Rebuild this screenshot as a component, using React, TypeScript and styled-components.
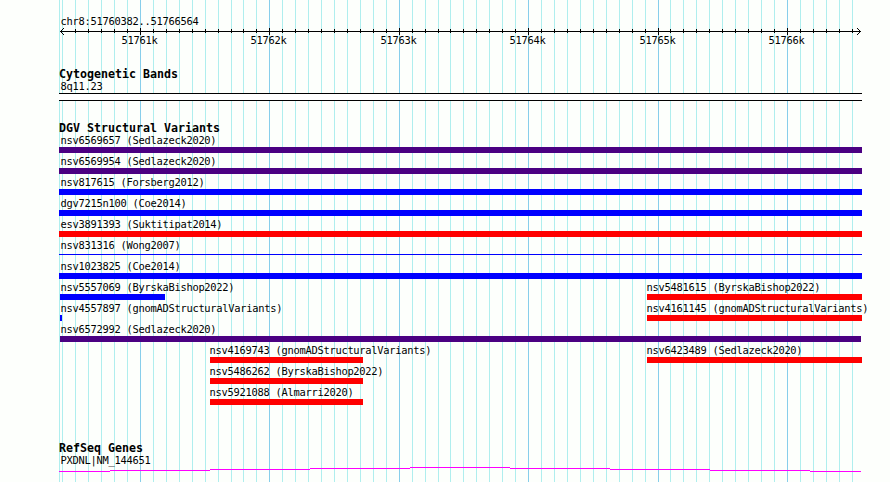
import React from 'react';
import styled, { createGlobalStyle } from "styled-components";

const GlobalStyle = createGlobalStyle`
  body{
    margin: 0;
    background: #fdfffc;
  }
`

const StyledBrowser = styled.div`
  position: relative;
  width: 890px;
  height: 482px;
  overflow: hidden;
  color: #000;
  background: #fdfffc;
`

const Gridlines = styled.svg`
  position: absolute;
  top: 0;
  left: 0;
`

const Content = styled.div`
  position: relative;
  display: flex;
  flex-direction: column;
  padding-left: 59px;
`

const Label = styled.div<{ $shift?: number }>`
  height: 12px;
  margin-left: ${({ $shift = 1 }) => $shift}px;
  box-sizing: border-box;
  padding-left: 0.5px;
  font-family: "DejaVu Sans Mono", monospace;
  font-kerning: none;
  font-size: 10.4px;
  letter-spacing: -0.261px;
  line-height: 13px;
  white-space: pre;
`

const Title = styled.div`
  height: 12px;
  font-family: "DejaVu Sans Mono", monospace;
  font-size: 11.63px;
  font-weight: bold;
  line-height: 12px;
  white-space: pre;
`

const Ruler = styled.header`
  height: 68px;
  padding-top: 15px;
  box-sizing: border-box;
`

const Axis = styled.svg`
  display: block;
  margin-top: 1px;
`

const AxisLabels = styled.div`
  display: flex;
  margin: -1px 0 0 62px;
`

const AxisLabel = styled(Label)<{ $width: number }>`
  flex: none;
  width: ${({ $width }) => $width}px;
`

const Track = styled.section<{ $height: number }>`
  height: ${({ $height }) => $height}px;
`

const Band = styled.div`
  width: 803px;
  height: 8px;
  box-sizing: border-box;
  margin-top: 1px;
  border: solid #000;
  border-width: 1px 0;
  background: #fff;
`

const Lane = styled.div`
  display: flex;
  height: 21px;
`

const Feature = styled.div<{ $gap: number; $width: number }>`
  flex: none;
  width: ${({ $width }) => $width}px;
  margin-left: ${({ $gap }) => $gap}px;
`

const Bar = styled.div<{ $color: string; $thin?: boolean }>`
  height: ${({ $thin }) => ($thin ? 1 : 6)}px;
  margin-top: ${({ $thin }) => ($thin ? 3 : 1)}px;
  background: ${({ $color }) => $color};
`

const Transcript = styled.svg`
  display: block;
  margin-top: 1px;
`

const LEFT = 59;
const INDIGO = '#4b0082';
const BLUE = '#0000ff';
const RED = '#ff0000';

const majors = [140, 269, 399, 528, 658, 787];
const ticks = [
    62, 75, 88, 101, 114, 127, 140, 153, 166, 179, 192, 205, 218, 231, 243, 256,
    269, 282, 295, 308, 321, 334, 347, 360, 373, 386, 399, 412, 425, 438, 450, 463,
    476, 489, 502, 515, 528, 541, 554, 567, 580, 593, 606, 619, 632, 645, 658, 670,
    683, 696, 709, 722, 735, 748, 761, 774, 787, 800, 813, 826, 839, 852,
];
const axisLabels = ['51761k', '51762k', '51763k', '51764k', '51765k', '51766k'];

type Variant = {
    name: string;
    start: number;
    end: number;
    color: string;
    thin?: boolean;
};

const lanes: Variant[][] = [
    [{ name: 'nsv6569657 (Sedlazeck2020)', start: 59, end: 862, color: INDIGO }],
    [{ name: 'nsv6569954 (Sedlazeck2020)', start: 59, end: 862, color: INDIGO }],
    [{ name: 'nsv817615 (Forsberg2012)', start: 59, end: 862, color: BLUE }],
    [{ name: 'dgv7215n100 (Coe2014)', start: 59, end: 862, color: BLUE }],
    [{ name: 'esv3891393 (Suktitipat2014)', start: 59, end: 862, color: RED }],
    [{ name: 'nsv831316 (Wong2007)', start: 59, end: 862, color: BLUE, thin: true }],
    [{ name: 'nsv1023825 (Coe2014)', start: 59, end: 862, color: BLUE }],
    [
        { name: 'nsv5557069 (ByrskaBishop2022)', start: 60, end: 165, color: BLUE },
        { name: 'nsv5481615 (ByrskaBishop2022)', start: 647, end: 862, color: RED },
    ],
    [
        { name: 'nsv4557897 (gnomADStructuralVariants)', start: 60, end: 62, color: BLUE },
        { name: 'nsv4161145 (gnomADStructuralVariants)', start: 647, end: 862, color: RED },
    ],
    [{ name: 'nsv6572992 (Sedlazeck2020)', start: 60, end: 861, color: INDIGO }],
    [
        { name: 'nsv4169743 (gnomADStructuralVariants)', start: 210, end: 363, color: RED },
        { name: 'nsv6423489 (Sedlazeck2020)', start: 647, end: 862, color: RED },
    ],
    [{ name: 'nsv5486262 (ByrskaBishop2022)', start: 210, end: 363, color: RED }],
    [{ name: 'nsv5921088 (Almarri2020)', start: 210, end: 363, color: RED }],
];

const labelShift = (start: number) => {
    if (start === LEFT) return 1;
    return start === 60 ? 0 : -1;
};

const VariantLane = ({ variants }: { variants: Variant[] }) => (
    <Lane>
        {variants.map((v, i) => (
            <Feature
                key={v.name}
                $gap={v.start - (i ? variants[i - 1].end : LEFT)}
                $width={v.end - v.start}
            >
                <Label $shift={labelShift(v.start)}>{v.name}</Label>
                <Bar $color={v.color} $thin={v.thin} />
            </Feature>
        ))}
    </Lane>
);

const App = () => {
    return (
        <StyledBrowser>
            <GlobalStyle />
            <Gridlines width="890" height="482" shapeRendering="crispEdges">
                {[LEFT, ...ticks].map((x) => (
                    <rect
                        key={x}
                        x={x}
                        width="1"
                        height="482"
                        fill={majors.includes(x) ? '#87ceeb' : '#afeeee'}
                    />
                ))}
            </Gridlines>
            <Content>
                <Ruler>
                    <Label>chr8:51760382..51766564</Label>
                    <Axis width="803" height="7" viewBox="59 28 803 7" shapeRendering="crispEdges">
                        <rect x="60" y="31" width="801" height="1" />
                        {ticks.filter((x) => x > 62).map((x) => (
                            <rect
                                key={x}
                                x={x}
                                y={majors.includes(x) ? 28 : 29}
                                width="1"
                                height={majors.includes(x) ? 7 : 4}
                            />
                        ))}
                        {[1, 2, 3].map((n) => (
                            <React.Fragment key={n}>
                                <rect x={60 + n} y={31 - n} width="1" height="1" />
                                <rect x={60 + n} y={31 + n} width="1" height="1" />
                                <rect x={860 - n} y={31 - n} width="1" height="1" />
                                <rect x={860 - n} y={31 + n} width="1" height="1" />
                            </React.Fragment>
                        ))}
                    </Axis>
                    <AxisLabels>
                        {axisLabels.map((text, i) => (
                            <AxisLabel
                                key={text}
                                $shift={0}
                                $width={(majors[i + 1] ?? 862) - majors[i]}
                            >
                                {text}
                            </AxisLabel>
                        ))}
                    </AxisLabels>
                </Ruler>
                <Track $height={54}>
                    <Title>Cytogenetic Bands</Title>
                    <Label>8q11.23</Label>
                    <Band />
                </Track>
                <Track $height={320}>
                    <Title>DGV Structural Variants</Title>
                    {lanes.map((variants) => (
                        <VariantLane key={variants[0].name} variants={variants} />
                    ))}
                </Track>
                <Track $height={40}>
                    <Title>RefSeq Genes</Title>
                    <Label>PXDNL|NM_144651</Label>
                    <Transcript width="803" height="5" viewBox="59 467 803 5" shapeRendering="crispEdges">
                        <g fill="#ff00ff">
                            <rect x="59" y="471" width="51" height="1" />
                            <rect x="110" y="470" width="100" height="1" />
                            <rect x="210" y="469" width="100" height="1" />
                            <rect x="310" y="468" width="100" height="1" />
                            <rect x="410" y="467" width="100" height="1" />
                            <rect x="510" y="468" width="100" height="1" />
                            <rect x="610" y="469" width="100" height="1" />
                            <rect x="710" y="470" width="100" height="1" />
                            <rect x="810" y="471" width="51" height="1" />
                        </g>
                    </Transcript>
                </Track>
            </Content>
        </StyledBrowser>
    );
};

export default App;
